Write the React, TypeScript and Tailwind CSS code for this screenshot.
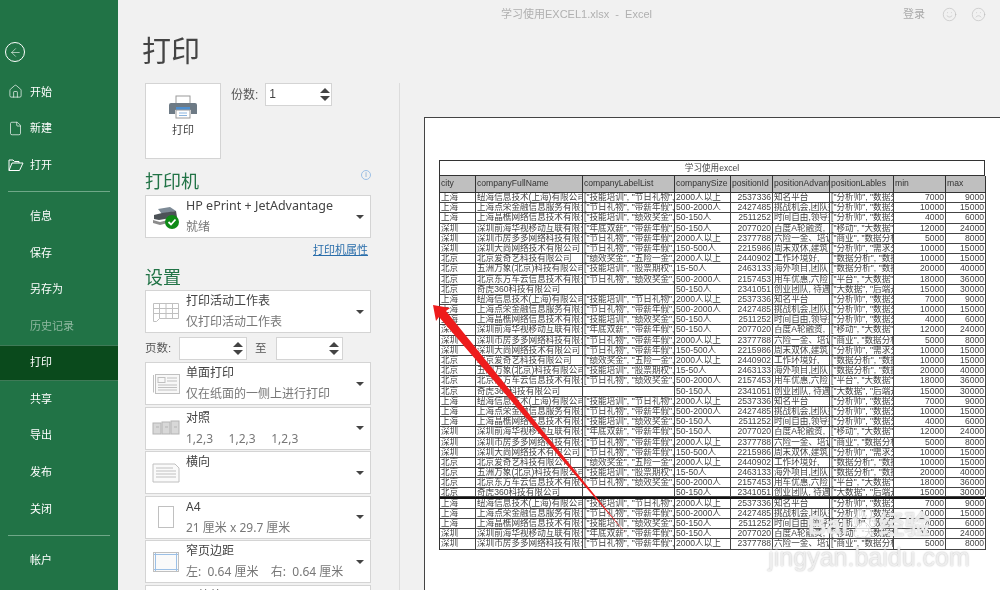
import { ArrowLeft, Home, File, Smile, Frown } from "lucide-react";

const font = "font-['Liberation_Sans','Noto_Sans_CJK_SC',sans-serif]";

const OpenFolder = (
  <svg width="16" height="14" viewBox="0 0 16 14" fill="none" stroke="currentColor" strokeWidth="1">
    <path d="M1 12.500V2h4l1.500 1.500H11V5" />
    <path d="M1 12.500L4 5h11l-3.500 7.500z" />
  </svg>
);

const topMenu = [
  { label: "开始", icon: <Home size={15} strokeWidth={1.1} /> },
  { label: "新建", icon: <File size={15} strokeWidth={1.1} /> },
  { label: "打开", icon: OpenFolder },
];

const rows = [
  ["上海", "纽海信息技术(上海)有限公司", '["技能培训", "节日礼物", "带薪年假"]', "2000人以上", "2537336", "知名平台", '["分析师", "数据分析"]', "7000", "9000"],
  ["上海", "上海点荣金融信息服务有限责任公司", '["节日礼物", "带薪年假", "绩效奖金"]', "500-2000人", "2427485", "挑战机会,团队好", '["分析师", "数据分析"]', "10000", "15000"],
  ["上海", "上海晶樵网络信息技术有限公司", '["技能培训", "绩效奖金", "岗位晋升"]', "50-150人", "2511252", "时间自由,领导好", '["分析师", "数据分析"]', "4000", "6000"],
  ["深圳", "深圳前海华视移动互联有限公司", '["年底双薪", "带薪年假", "绩效奖金"]', "50-150人", "2077020", "百度A轮融资,", '["移动", "大数据", "算法"]', "12000", "24000"],
  ["深圳", "深圳市房多多网络科技有限公司", '["节日礼物", "带薪年假", "绩效奖金"]', "2000人以上", "2377788", "六险一金、培训", '["商业", "数据分析"]', "5000", "8000"],
  ["深圳", "深圳大尚网络技术有限公司", '["节日礼物", "带薪年假", "股票期权"]', "150-500人", "2215986", "周末双休,建筑", '["分析师", "需求分析"]', "10000", "15000"],
  ["北京", "北京爱奇艺科技有限公司", '["绩效奖金", "五险一金", "带薪年假"]', "2000人以上", "2440902", "工作环境好,", '["数据分析", "数据挖掘"]', "10000", "15000"],
  ["北京", "五洲万象(北京)科技有限公司", '["技能培训", "股票期权", "绩效奖金"]', "15-50人", "2463133", "海外项目,团队", '["数据分析", "数据挖掘"]', "20000", "40000"],
  ["北京", "北京东方车云信息技术有限公司", '["节日礼物", "绩效奖金", "带薪年假"]', "500-2000人", "2157453", "用车优惠,六险", '["平台", "大数据", "分析"]', "18000", "36000"],
  ["北京", "奇虎360科技有限公司", "", "50-150人", "2341051", "创业团队, 待遇", '["大数据", "后端开发"]', "15000", "30000"],
];

const allRows = [...rows, ...rows, ...rows, ...rows.slice(0, 5)];
const headers = ["city", "companyFullName", "companyLabelList", "companySize", "positionId", "positionAdvantage", "positionLables", "min", "max"];
const gridCols = "grid grid-cols-[36px_107px_92px_56px_42px_57px_64px_52px_40px]";

function Spinner({ className }: { className: string }) {
  return (
    <div className={`relative h-[23px] border border-[#d4d4d4] bg-white ${className}`}>
      <span className="absolute right-[3px] top-[4px] h-0 w-0 border-x-[5px] border-b-[5px] border-x-transparent border-b-[#444]" />
      <span className="absolute right-[3px] bottom-[4px] h-0 w-0 border-x-[5px] border-t-[5px] border-x-transparent border-t-[#444]" />
    </div>
  );
}

function Drop({ icon, title, sub, titleClass = "", className = "" }: { icon: React.ReactNode; title: string; sub?: string; titleClass?: string; className?: string }) {
  return (
    <div className={`flex h-[43px] w-[226px] shrink-0 items-center border border-[#d4d4d4] bg-white ${className}`}>
      <div className="flex w-[40px] shrink-0 justify-center">{icon}</div>
      <div className="flex h-full min-w-0 flex-1 flex-col gap-[6px] whitespace-pre pt-[2px] font-['Noto_Sans','Noto_Sans_CJK_SC',sans-serif] text-[12px] leading-[15px]">
        <div className={`text-[#444] ${titleClass}`}>{title}</div>
        {sub && <div className="text-[#777]">{sub}</div>}
      </div>
      <span className="mr-[6px] h-0 w-0 border-x-[4px] border-t-[4px] border-x-transparent border-t-[#444]" />
    </div>
  );
}

const SheetIcon = (
  <svg width="28" height="24" viewBox="0 0 28 24" fill="none" stroke="#c0c0c0">
    <path d="M1.500 3.500h25v15h-19l-3 3h-3z" />
    <path d="M7.500 3.500v15M14 3.500v15M20.500 3.500v15M1.500 8.500h25M1.500 13.500h25" />
  </svg>
);
const SingleIcon = (
  <svg width="28" height="24" viewBox="0 0 28 24" fill="none" stroke="#c0c0c0">
    <path d="M1.500 3v17.500" />
    <rect x="3.500" y="2.500" width="24" height="19" fill="#f8f8f8" />
    <rect x="6" y="5.500" width="7" height="5" />
    <path d="M15 6h10M15 9h10M6 13h19M6 15.500h19M6 18h19" />
  </svg>
);
const CollateIcon = (
  <svg width="28" height="20" viewBox="0 0 28 20" fill="#d8d8d8" stroke="#b4b4b4">
    <rect x="1" y="5" width="8" height="11" />
    <rect x="10" y="4" width="8" height="12" />
    <rect x="19" y="3" width="8" height="13" />
    <path d="M4 9h3M13 9h3M22 9h3" />
  </svg>
);
const LandscapeIcon = (
  <svg width="28" height="20" viewBox="0 0 28 20" fill="#fafafa" stroke="#c0c0c0">
    <path d="M1 1h22l4 4v14h-26z" />
    <path d="M4 5h17M4 8h20M4 11h20M4 14h20" />
  </svg>
);
const PaperIcon = (
  <svg width="18" height="24" viewBox="0 0 18 24" fill="#fff" stroke="#c0c0c0">
    <rect x="1.500" y="1.500" width="15" height="21" />
  </svg>
);
const MarginIcon = (
  <svg width="26" height="20" viewBox="0 0 26 20" fill="#fafafa" stroke="#c0c0c0">
    <rect x="0.500" y="0.500" width="25" height="19" />
    <path d="M2.500 1v18M23.500 1v18M1 2.500h24M1 17.500h24" stroke="#9cc0e6" fill="none" />
  </svg>
);
const PrinterCheck = (
  <svg width="28" height="24" viewBox="0 0 28 24">
    <path d="M6 4l12-2 6 4-14 3z" fill="#7d8a96" />
    <path d="M2 10l8-2 14-2 1 6-18 3-5-1z" fill="#4c5257" />
    <path d="M1 15l7 2 8-2v3l-8 2-7-2z" fill="#8c8c8c" />
    <circle cx="20" cy="17" r="7" fill="#0e8a16" />
    <path d="M16.500 17l2.500 2.500 4.500-5" fill="none" stroke="#fff" strokeWidth="1.800" />
  </svg>
);

export default function App() {
  return (
    <div className={`relative flex h-[590px] w-[1000px] overflow-hidden bg-[#f1f1f1] blur-[0.4px] ${font}`}>
      {/* sidebar */}
      <aside className="flex w-[118px] shrink-0 flex-col bg-[#217346] text-[11px] text-white">
        <div className="pl-[5px] pt-[42px] pb-[11.500px]">
          <div className="flex h-[20px] w-[20px] items-center justify-center rounded-full border border-white">
            <ArrowLeft size={13} strokeWidth={1.1} />
          </div>
        </div>
        {topMenu.map((m) => (
          <div key={m.label} className="flex h-[36.500px] items-center">
            <span className="flex w-[30px] justify-center pl-[1px]">{m.icon}</span>
            {m.label}
          </div>
        ))}
        <div className="mx-[8px] mb-[6.500px] mt-[7.500px] h-px bg-[#6fa888]" />
        {["信息", "保存", "另存为"].map((t) => (
          <div key={t} className="flex h-[36.500px] items-center pl-[30px]">{t}</div>
        ))}
        <div className="flex h-[36.500px] items-center pl-[30px] text-[#8fb8a0]">历史记录</div>
        <div className="mt-[0.500px] flex h-[36px] items-center border-y border-[#3f7a57] bg-[#0a4a1c] pl-[30px]">打印</div>
        {["共享", "导出", "发布", "关闭"].map((t) => (
          <div key={t} className="flex h-[36.800px] items-center pl-[30px]">{t}</div>
        ))}
        <div className="mx-[8px] mt-[7px] h-px bg-[#6fa888]" />
        <div className="flex h-[50px] items-center pl-[30px]">帐户</div>
      </aside>

      {/* print options */}
      <section className="flex w-[281px] shrink-0 flex-col pl-[27px]">
        <h1 className="-ml-[3px] h-[83px] shrink-0 pt-[30px] text-[29px] leading-[44px] text-[#444]">打印</h1>
        <div className="flex h-[76px] shrink-0">
          <button className="flex h-[76px] w-[76px] flex-col items-center border border-[#d4d4d4] bg-white pt-[11px] text-[11px] text-[#444]">
            <svg width="28" height="24" viewBox="0 0 28 24">
              <rect x="7" y="1" width="14" height="8" fill="#fff" stroke="#9a9a9a" />
              <path d="M2 8h24a2 2 0 0 1 2 2v9h-6v-4H6v4H0v-9a2 2 0 0 1 2-2z" fill="#6d7a85" />
              <rect x="7" y="12" width="14" height="3" fill="#4d8fd0" />
              <rect x="7" y="15" width="14" height="8" fill="#fff" stroke="#9a9a9a" />
              <path d="M10 18h8M10 20.500h8" stroke="#8ab4de" />
            </svg>
            <span className="mt-[3px]">打印</span>
          </button>
          <span className="ml-[10px] mt-[3px] text-[12px] leading-[18px] text-[#555]">份数:</span>
          <div className="relative ml-[7px] h-[23px] w-[67px] border border-[#d4d4d4] bg-white pl-[3px] text-[12px] leading-[21px] text-[#444]">
            1
            <span className="absolute right-[1px] top-[4px] h-0 w-0 border-x-[5px] border-b-[5px] border-x-transparent border-b-[#444]" />
            <span className="absolute right-[1px] bottom-[4px] h-0 w-0 border-x-[5px] border-t-[5px] border-x-transparent border-t-[#444]" />
          </div>
        </div>
        <div className="flex h-[36px] w-[226px] shrink-0 items-end justify-between">
          <h2 className="text-[18px] leading-[26px] text-[#217346]">打印机</h2>
          <span className="mb-[15px] flex h-[10px] w-[10px] items-center justify-center rounded-full border border-[#9cc0e6] text-[7px] text-[#6f9fd0]">i</span>
        </div>
        <Drop icon={PrinterCheck} title="HP ePrint + JetAdvantage" sub="就绪" titleClass="text-[12.500px]" />
        <a className="mt-[3px] h-[18px] w-[223px] shrink-0 text-right text-[11px] leading-[18px] text-[#2a6eab] underline">打印机属性</a>
        <h2 className="mt-[5px] h-[26px] shrink-0 text-[18px] leading-[28px] text-[#217346]">设置</h2>
        <Drop icon={SheetIcon} title="打印活动工作表" sub="仅打印活动工作表" />
        <div className="mt-[4px] flex h-[23px] w-[226px] shrink-0 items-center text-[11.500px] text-[#555]">
          <span className="w-[34px]">页数:</span>
          <Spinner className="w-[68px]" />
          <span className="ml-[8px] w-[21px]">至</span>
          <Spinner className="w-[67px]" />
        </div>
        <Drop icon={SingleIcon} title="单面打印" sub="仅在纸面的一侧上进行打印" className="mt-[2px]" />
        <Drop icon={CollateIcon} title="对照" sub={"1,2,3     1,2,3     1,2,3"} className="mt-[1.500px]" />
        <Drop icon={LandscapeIcon} title="横向" className="mt-[1.500px]" />
        <Drop icon={PaperIcon} title="A4" sub="21 厘米 x 29.7 厘米" className="mt-[1.500px]" />
        <Drop icon={MarginIcon} title="窄页边距" sub="左:  0.64 厘米    右:  0.64 厘米" className="mt-[1.500px]" />
        <Drop icon={null} title="无缩放" className="mt-[1.500px]" />
      </section>

      {/* preview */}
      <main className="relative flex min-w-0 flex-1 flex-col">
        <div className="flex h-[83px] shrink-0 flex-col text-[11px] text-[#b0b0b0]">
          <div className="flex h-[28px] items-center">
            <span className="ml-[102px] whitespace-pre">学习使用EXCEL1.xlsx  -  Excel</span>
            <span className="ml-auto text-[#aaa]">登录</span>
            <Smile size={15} strokeWidth={1} className="ml-[17px] text-[#bbb]" />
            <Frown size={15} strokeWidth={1} className="ml-[14px] mr-[14px] text-[#bbb]" />
          </div>
        </div>
        <div className="flex min-h-0 flex-1">
          <div className="w-px bg-[#dcdcdc]" />
          <div className="ml-[24px] mt-[34px] flex-1 overflow-hidden border-l border-t border-[#444] bg-white pl-[14px] pt-[42px]">
            <div className="w-[546px] border-l border-t border-[#333] text-[8.600px] leading-[9px] text-[#444]">
              <div className="h-[15px] border-b border-r border-[#333] text-center leading-[14px]">学习使用excel</div>
              <div className={`${gridCols} h-[17px] bg-[#bfbfbf] leading-[15px] text-[#333]`}>
                {headers.map((h) => (
                  <div key={h} className="overflow-hidden whitespace-nowrap border-b border-r border-[#333] pl-[1px]">{h}</div>
                ))}
              </div>
              {allRows.map((r, i) => (
                <div key={i} className={`${gridCols} h-[10.200px] ${i === 29 ? "border-b-2 border-[#111]" : ""}`}>
                  {r.map((c, j) => (
                    <div
                      key={j}
                      className={`overflow-hidden whitespace-nowrap border-b border-r border-[#444] px-[1px] ${j === 4 || j > 6 ? "text-right" : ""}`}
                    >
                      {c}
                    </div>
                  ))}
                </div>
              ))}
            </div>
          </div>
        </div>

        {/* red annotation arrow */}
        <svg className="absolute left-0 top-0" width="600" height="590" viewBox="0 0 600 590" fill="#ee1c1c">
          <path d="M34 305L37 321L40 317L228 535L47 311L51 308Z" />
        </svg>

        {/* watermark */}
        <div className="absolute left-[381px] top-[508px] flex w-[178px] flex-col items-center whitespace-nowrap text-white/75 [text-shadow:0_0_1.500px_#aaa]">
          <div className="flex items-center text-[26px] font-bold leading-[34px]">
            <span>Bai</span>
            <svg width="30" height="32" viewBox="0 0 30 32" fill="#fff" fillOpacity="0.75" stroke="#bbb" strokeWidth="0.6">
              <ellipse cx="7" cy="13" rx="3.500" ry="5" />
              <ellipse cx="12" cy="5" rx="3.500" ry="5" />
              <ellipse cx="20" cy="5" rx="3.500" ry="5" />
              <ellipse cx="25" cy="13" rx="3.500" ry="5" />
              <path d="M15 13c4 0 9 7 9 12 0 4-5 4-9 3-4 1-9 1-9-3 0-5 5-12 9-12z" />
            </svg>
            <span>经验</span>
          </div>
          <span className="text-[25px] leading-[30px]">jingyan.baidu.com</span>
        </div>
      </main>
    </div>
  );
}
